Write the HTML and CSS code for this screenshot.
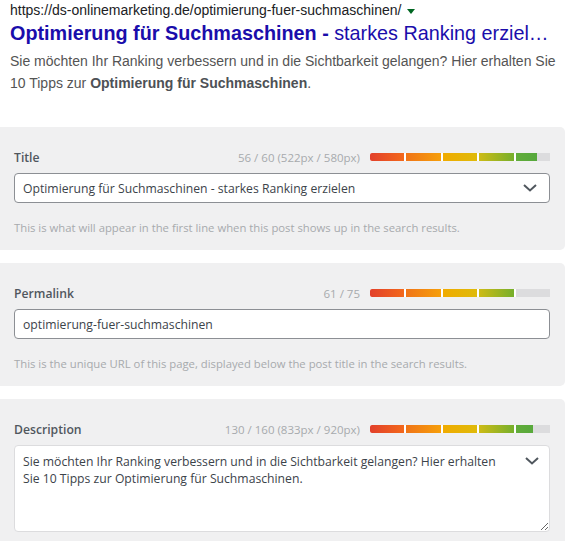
FILE: index.html
```html
<!DOCTYPE html>
<html lang="de">
<head>
<meta charset="utf-8">
<title>Snippet</title>
<link rel="stylesheet" href="styles.css">
</head>
<body>
<div class="serp">
  <div class="serp-url">https://ds-onlinemarketing.de/optimierung-fuer-suchmaschinen/ <span class="serp-caret"></span></div>
  <div class="serp-title"><b>Optimierung für Suchmaschinen -</b> starkes Ranking erziel…</div>
  <div class="serp-desc">Sie möchten Ihr Ranking verbessern und in die Sichtbarkeit gelangen? Hier erhalten Sie 10 Tipps zur <b>Optimierung für Suchmaschinen</b>.</div>
</div>

<section class="panel">
  <div class="field-head">
    <span class="field-label">Title</span>
    <span class="field-count">56 / 60 (522px / 580px)</span>
    <div class="meter">
      <span class="seg s1"></span><span class="seg s2"></span><span class="seg s3"></span><span class="seg s4"></span><span class="seg s5"></span>
      <span class="meter-rest" style="width:7.2%"></span>
    </div>
  </div>
  <div class="control">
    <span class="control-text">Optimierung für Suchmaschinen - starkes Ranking erzielen</span>
    <svg class="chev" width="14" height="8" viewBox="0 0 14 8"><path d="M1 1l6 5.5L13 1" fill="none" stroke="#50575e" stroke-width="2"/></svg>
  </div>
  <p class="help">This is what will appear in the first line when this post shows up in the search results.</p>
</section>

<section class="panel">
  <div class="field-head">
    <span class="field-label">Permalink</span>
    <span class="field-count">61 / 75</span>
    <div class="meter">
      <span class="seg s1"></span><span class="seg s2"></span><span class="seg s3"></span><span class="seg s4"></span><span class="seg s5"></span>
      <span class="meter-rest" style="width:18.7%"></span>
    </div>
  </div>
  <div class="control">
    <span class="control-text">optimierung-fuer-suchmaschinen</span>
  </div>
  <p class="help">This is the unique URL of this page, displayed below the post title in the search results.</p>
</section>

<section class="panel">
  <div class="field-head">
    <span class="field-label">Description</span>
    <span class="field-count">130 / 160 (833px / 920px)</span>
    <div class="meter">
      <span class="seg s1"></span><span class="seg s2"></span><span class="seg s3"></span><span class="seg s4"></span><span class="seg s5"></span>
      <span class="meter-rest" style="width:9.5%"></span>
    </div>
  </div>
  <div class="area-wrap">
    <textarea class="area" rows="4">Sie möchten Ihr Ranking verbessern und in die Sichtbarkeit gelangen? Hier erhalten Sie 10 Tipps zur Optimierung für Suchmaschinen.</textarea>
    <svg class="chev chev-area" width="14" height="8" viewBox="0 0 14 8"><path d="M1 1l6 5.5L13 1" fill="none" stroke="#50575e" stroke-width="2"/></svg>
  </div>
</section>
</body>
</html>
```

FILE: styles.css
```css
* { box-sizing: border-box; }
html, body { margin: 0; padding: 0; background: #fff; }
body { font-family: "Open Sans", "Noto Sans", sans-serif; }

.serp {
  padding: 0 12px 0 10px;
  font-family: "Liberation Sans", Arial, sans-serif;
}
.serp-url {
  font-size: 14px;
  line-height: 20px;
  color: #202124;
  white-space: nowrap;
}
.serp-caret {
  display: inline-block;
  width: 0; height: 0;
  border-left: 4px solid transparent;
  border-right: 4px solid transparent;
  border-top: 5px solid #006621;
  vertical-align: middle;
  margin-left: 2px;
}
.serp-title {
  margin-top: 1px;
  font-size: 19.8px;
  line-height: 24px;
  color: #1a0dab;
  white-space: nowrap;
}
.serp-desc {
  margin-top: 5px;
  font-size: 14px;
  line-height: 22px;
  color: #545454;
}
.serp-desc b { color: #4d5156; }

.panel {
  width: 565px;
  margin-top: 33px;
  background: #f0f0f1;
  border-radius: 0 5px 5px 0;
  padding: 20px 15px 14px 14px;
}
.panel + .panel { margin-top: 13px; }

.field-head {
  display: flex;
  align-items: center;
  height: 20px;
}
.field-label {
  font-size: 12.2px;
  font-weight: 600;
  color: #50575e;
}
.field-count {
  margin-left: auto;
  margin-right: 10px;
  font-size: 11.5px;
  color: #a7aaad;
}
.meter {
  position: relative;
  display: flex;
  gap: 2px;
  width: 180px;
  height: 8px;
  background: #fff;
}
.seg { flex: 1; height: 100%; }
.s1 { background: linear-gradient(90deg, #e2402b, #f3681b); border-radius: 2px 0 0 2px; }
.s2 { background: linear-gradient(90deg, #f07418, #f69f0a); }
.s3 { background: linear-gradient(90deg, #f0ab00, #dfba0a); }
.s4 { background: linear-gradient(90deg, #cdbb16, #76af2c); }
.s5 { background: linear-gradient(90deg, #62ac3a, #4ea63e); }
.meter-rest {
  position: absolute;
  top: 0; right: 0; bottom: 0;
  background: #dcdcde;
}

.control {
  display: flex;
  align-items: center;
  margin-top: 6px;
  height: 30px;
  background: #fff;
  border: 1px solid #8c8f94;
  border-radius: 4px;
  padding: 0 12px 0 8px;
}
.control-text {
  flex: 1;
  font-size: 12.2px;
  color: #3c434a;
  white-space: nowrap;
}
.chev { display: block; }

.help {
  margin: 16px 0 0;
  font-size: 11.3px;
  line-height: 17px;
  color: #a7aaad;
}

.area-wrap {
  position: relative;
  margin-top: 6px;
}
.area {
  display: block;
  width: 100%;
  height: 87px;
  margin: 0;
  padding: 7px 36px 6px 8px;
  font-family: "Open Sans", "Noto Sans", sans-serif;
  font-size: 12.2px;
  line-height: 17px;
  color: #3c434a;
  background: #fff;
  border: 1px solid #dcdcde;
  border-radius: 4px;
  resize: vertical;
  overflow: hidden;
}
.chev-area {
  position: absolute;
  top: 12px;
  right: 11px;
}
```
